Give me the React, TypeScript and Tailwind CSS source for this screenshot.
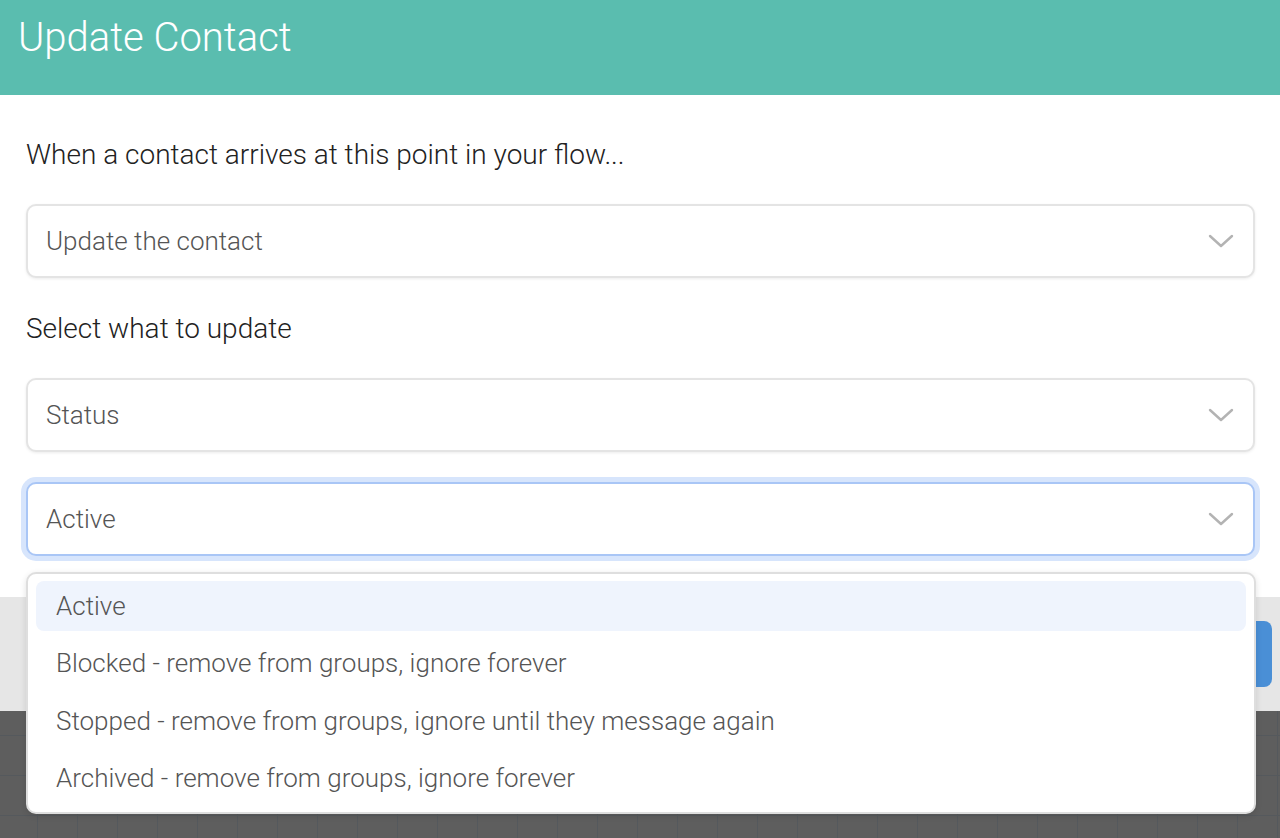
import React from 'react';

const font = "font-['Roboto','Liberation_Sans',sans-serif]";

function Chevron() {
  return (
    <svg width="28" height="16" viewBox="0 0 28 16" className="flex-shrink-0" aria-hidden>
      <path d="M3 3 L14 13 L25 3" fill="none" stroke="#b3b3b3" strokeWidth="2.4" strokeLinecap="round" strokeLinejoin="round" />
    </svg>
  );
}

interface SelectBoxProps {
  value: string;
  focused?: boolean;
  className?: string;
}

function SelectBox({ value, focused = false, className = '' }: SelectBoxProps) {
  return (
    <div
      className={
        'flex items-center justify-between h-[74px] rounded-[10px] bg-white pl-[18px] pr-[18px] ' +
        (focused
          ? 'border-2 border-[#a9c6f6] ring-[5px] ring-[#d7e5fc] '
          : 'border-2 border-[#e4e4e4] shadow-[0_1px_3px_rgba(0,0,0,0.08)] ') +
        className
      }
    >
      <span className="text-[26px] font-light text-[#555] leading-none">{value}</span>
      <Chevron />
    </div>
  );
}

const OPTIONS = [
  'Active',
  'Blocked - remove from groups, ignore forever',
  'Stopped - remove from groups, ignore until they message again',
  'Archived - remove from groups, ignore forever',
];

export default function App() {
  return (
    <div
      className={`${font} relative h-[838px] w-full overflow-hidden bg-[#5e5e5e] bg-[image:linear-gradient(to_right,#55595d_1px,transparent_1px),linear-gradient(to_bottom,#55595d_1px,transparent_1px)] bg-[size:40px_40px] bg-[position:37px_15px]`}
    >
      <div className="flex flex-col bg-white">
        <div className="h-[95px] bg-[#5abdaf] pl-[18px] pt-[12px]">
          <h1 className="text-[40px] font-light text-white leading-[52px]">Update Contact</h1>
        </div>

        <div className="flex flex-col pl-[26px] pr-[25px] pt-[42px] pb-[41px]">
          <p className="text-[28px] font-light leading-[36px] text-[#222]">
            When a contact arrives at this point in your flow...
          </p>
          <SelectBox value="Update the contact" className="mt-[31px]" />
          <p className="mt-[33px] text-[28px] font-light leading-[36px] text-[#222]">Select what to update</p>
          <SelectBox value="Status" className="mt-[31px]" />
          <SelectBox value="Active" focused className="mt-[30px]" />
        </div>

        <div className="flex h-[114px] items-center justify-end bg-[#e6e6e6] pr-[8px]">
          <button className="h-[66px] w-[160px] rounded-[8px] bg-[#4a8fd6] text-[24px] text-white">Ok</button>
        </div>
      </div>

      <div className="absolute left-[26px] top-[572px] w-[1230px] rounded-[10px] border-2 border-[#dedede] bg-white px-[8px] pt-[7px] pb-[8px] shadow-[0_2px_6px_rgba(0,0,0,0.12)]">
        <ul className="flex flex-col gap-[7.6px]">
          {OPTIONS.map((opt, i) => (
            <li
              key={opt}
              className={
                'flex h-[50px] items-center rounded-[8px] px-[20px] text-[26px] font-light text-[#555] ' +
                (i === 0 ? 'bg-[#eff4fd]' : '')
              }
            >
              {opt}
            </li>
          ))}
        </ul>
      </div>
    </div>
  );
}
